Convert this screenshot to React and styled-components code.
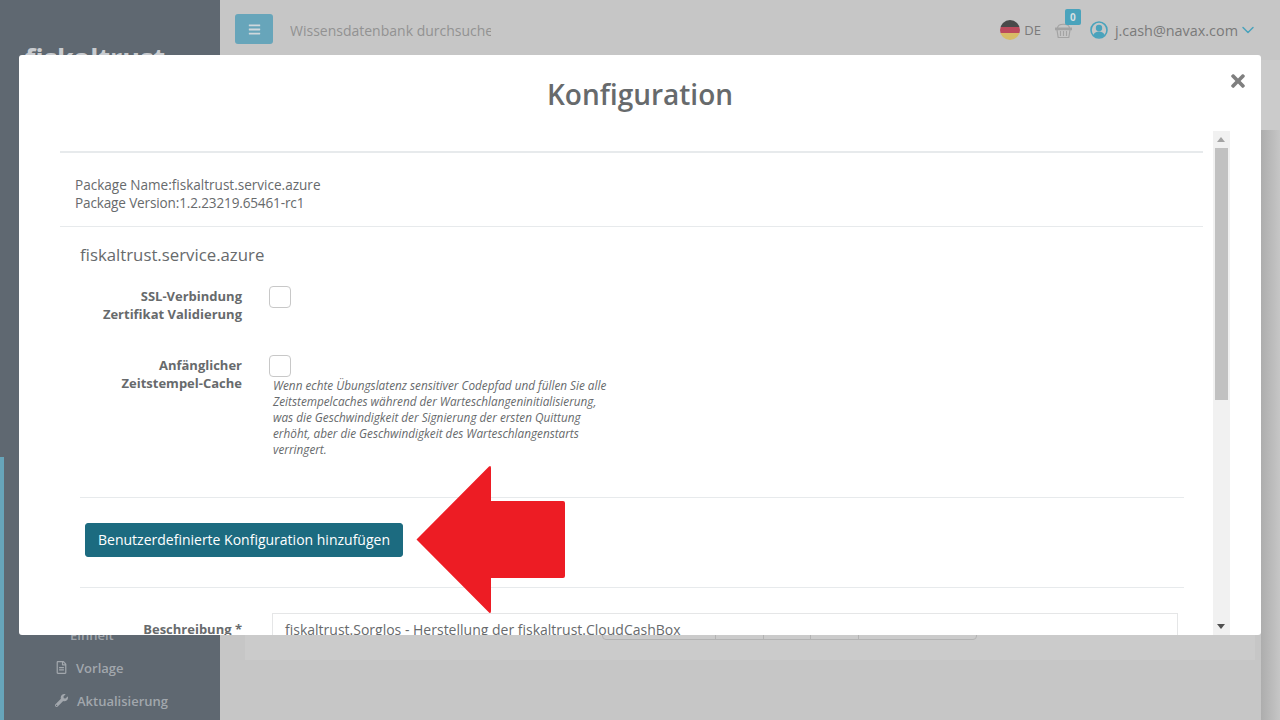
import React from 'react';
import styled, { createGlobalStyle } from 'styled-components';
import { FaBars, FaRegFileAlt, FaWrench, FaTimes } from 'react-icons/fa';
import { ChevronDown } from 'lucide-react';

const Global = createGlobalStyle`
  html, body { margin: 0; padding: 0; height: 720px; overflow: hidden; background: #c6c6c6; }
  body { font-family: "Open Sans", "Noto Sans", sans-serif; color: #676a6c; }
  * { box-sizing: border-box; }
`;

const Page = styled.div`
  display: flex;
  width: 1280px;
  height: 720px;
  overflow: hidden;
  position: relative;
`;

/* page behind the dialog */
const Sidebar = styled.aside`
  width: 220px;
  height: 720px;
  flex: none;
  background: #5f6871;
  display: flex;
  flex-direction: column;
  position: relative;
`;

const ActiveStrip = styled.div`
  position: absolute;
  left: 0;
  top: 457px;
  bottom: 0;
  width: 4px;
  background: #67a5ba;
`;

const Logo = styled.div`
  padding: 41px 0 0 25px;
  height: 618px;
  font-size: 27px;
  line-height: 34px;
  font-weight: 700;
  color: #c9ccd0;
`;

const NavItem = styled.div`
  display: flex;
  align-items: center;
  gap: ${p => p.$gap || 8}px;
  height: 33px;
  padding-left: ${p => p.$indent || 55}px;
  font-size: 13px;
  font-weight: 600;
  color: #a2a7ad;
  svg { font-size: 13px; flex: none; }
`;

const Main = styled.div`
  flex: 1;
  display: flex;
  flex-direction: column;
`;

const Topbar = styled.header`
  height: 60px;
  flex: none;
  padding: 14px 22px 0 15px;
  display: flex;
  align-items: flex-start;
  background: #c6c6c6;
`;

const MenuButton = styled.div`
  width: 38px;
  height: 30px;
  border-radius: 3px;
  background: #67a5ba;
  color: #cfd8dc;
  display: flex;
  align-items: center;
  justify-content: center;
  font-size: 13px;
`;

const Search = styled.div`
  width: 201px;
  margin-left: 17px;
  height: 30px;
  line-height: 34px;
  font-size: 14px;
  color: #929292;
  overflow: hidden;
  white-space: nowrap;
`;

const TopRight = styled.div`
  margin-left: auto;
  display: flex;
  align-items: center;
  height: 32px;
  color: #7a7a7a;
`;

const Lang = styled.span`
  font-size: 13px;
  margin: 0 14px 0 4px;
`;

const Basket = styled.div`
  position: relative;
  width: 17px;
  height: 18px;
  margin-right: 18px;
`;

const Badge = styled.span`
  position: absolute;
  left: 10px;
  top: -12px;
  width: 16px;
  height: 16px;
  border-radius: 2px;
  background: #4aa3bc;
  color: #d5dfe2;
  font-size: 10px;
  font-weight: 700;
  line-height: 16px;
  text-align: center;
`;

const UserMail = styled.span`
  margin-left: 7px;
  font-size: 14.4px;
`;

const PageHeading = styled.div`
  height: 70px;
  flex: none;
  background: #cbcbcb;
`;

const Content = styled.main`
  flex: 1;
  padding: 0 25px 60px 25px;
  display: flex;
`;

const Panel = styled.section`
  flex: 1;
  background: #cbcbcb;
  padding-bottom: 20px;
  display: flex;
  justify-content: flex-end;
  align-items: flex-end;
  padding-right: 278px;
`;

const Pager = styled.div`
  display: flex;
  height: 20px;
  border: 1px solid #b3b3b3;
  border-radius: 0 0 4px 4px;
`;

const PagerCell = styled.div`
  width: ${p => p.$w}px;
  border-left: ${p => (p.$first ? 'none' : '1px solid #b3b3b3')};
`;

const EdgeShadow = styled.div`
  position: absolute;
  top: 130px;
  right: 0;
  bottom: 0;
  width: 19px;
  background: linear-gradient(90deg, #adadad 0%, #c6c6c6 100%);
`;

/* dialog */
const Modal = styled.div`
  position: absolute;
  left: 19px;
  top: 55px;
  width: 1242px;
  height: 580px;
  background: #fff;
  border-radius: 3px;
  overflow: hidden;
  display: flex;
  flex-direction: column;
`;

const ModalHeader = styled.div`
  height: 76px;
  flex: none;
  text-align: center;
  position: relative;
`;

const ModalTitle = styled.h1`
  margin: 0;
  padding-top: 20px;
  font-size: 28px;
  line-height: 39px;
  font-weight: 600;
  color: #676a6c;
`;

const Close = styled.div`
  position: absolute;
  right: 13px;
  top: 16px;
  font-size: 20px;
  line-height: 20px;
  color: #7f7f7f;
`;

const ModalBody = styled.div`
  flex: 1;
  margin: 0 58px 0 41px;
  overflow: hidden;
`;

const Scroll = styled.div`
  position: absolute;
  left: 1213px;
  top: 131px;
  width: 17px;
  height: 504px;
  background: #f1f1f1;
`;

const ScrollThumb = styled.div`
  position: absolute;
  left: 2px;
  top: 17px;
  width: 13px;
  height: 252px;
  background: #c1c1c1;
`;

const ScrollArrow = styled.div`
  position: absolute;
  left: 4px;
  ${p => (p.$down ? 'bottom: 6px; border-top: 5px solid #505050;' : 'top: 6px; border-bottom: 5px solid #a3a3a3;')}
  border-left: 4px solid transparent;
  border-right: 4px solid transparent;
  width: 0;
  height: 0;
`;

const Rule = styled.div`
  height: ${p => p.$h || 1}px;
  background: ${p => p.$c || '#e7eaec'};
  margin: ${p => p.$m || '0'};
`;

const PackageInfo = styled.div`
  padding: 23px 15px 14px;
  font-size: 13.55px;
  line-height: 18px;
`;

const PackageLine = styled.div`
  letter-spacing: ${p => (p.$tight ? '-0.14px' : '0')};
`;

const Form = styled.div`
  padding: 0 19px 0 20px;
`;

const FormTitle = styled.h3`
  margin: 0;
  padding-top: 17px;
  height: 59px;
  font-size: 16.8px;
  line-height: 22px;
  font-weight: 400;
  color: #676a6c;
`;

const Row = styled.div`
  display: grid;
  grid-template-columns: 162px 1fr;
  column-gap: 27px;
  min-height: ${p => p.$min}px;
`;

const Label = styled.label`
  text-align: right;
  font-size: 13px;
  line-height: 18px;
  font-weight: 700;
  padding-top: ${p => p.$top || 1}px;
  color: #676a6c;
`;

const Check = styled.span`
  display: block;
  width: 22px;
  height: 22px;
  border: 1px solid #c8c8c8;
  border-radius: 4px;
  background: #fff;
`;

const Hint = styled.p`
  margin: 0 0 0 4px;
  width: 340px;
  font-size: 11.75px;
  line-height: 16px;
  font-style: italic;
  color: #676a6c;
`;

const ButtonRow = styled.div`
  padding: 25px 0 30px 5px;
`;

const PrimaryButton = styled.button`
  display: block;
  width: 318px;
  height: 34px;
  border: 1px solid #1c6b80;
  border-radius: 3px;
  background: #1c6b80;
  color: #fff;
  font: 400 14px/20px "Open Sans", sans-serif;
  padding: 0;
`;

const InputRow = styled.div`
  display: grid;
  grid-template-columns: 162px 1fr;
  column-gap: 30px;
  padding-top: 25px;
  padding-right: 6px;
`;

const TextInput = styled.div`
  height: 34px;
  border: 1px solid #e5e6e7;
  padding: 6px 12px;
  font-size: 14px;
  line-height: 20px;
  color: #676a6c;
`;

const ArrowMark = styled.svg`
  position: absolute;
  left: 416px;
  top: 465px;
`;

const Flag = () => (
  <svg width="20" height="20" viewBox="0 0 20 20">
    <defs><clipPath id="flag"><circle cx="10" cy="10" r="10" /></clipPath></defs>
    <g clipPath="url(#flag)">
      <rect width="20" height="7" fill="#4a4a4a" />
      <rect y="7" width="20" height="6" fill="#bc4a5c" />
      <rect y="13" width="20" height="7" fill="#d8bc66" />
    </g>
  </svg>
);

const BasketIcon = () => (
  <svg width="17" height="18" viewBox="0 0 17 18" fill="none" stroke="#a3a3a3" strokeWidth="1.2">
    <path d="M2.5 7 C3 2 14 2 14.5 7" />
    <path d="M0.5 7h16v1.6h-16z" fill="#a3a3a3" />
    <path d="M2 9l1.2 7.5h10.6L15 9" />
    <path d="M5.5 10v5M8.5 10v5M11.5 10v5" />
  </svg>
);

const UserIcon = () => (
  <svg width="18" height="18" viewBox="0 0 18 18">
    <circle cx="9" cy="9" r="8" fill="none" stroke="#4aa3bc" strokeWidth="1.6" />
    <circle cx="9" cy="7" r="3.2" fill="#4aa3bc" />
    <path d="M3.4 14.5c.6-3 3-4 5.6-4s5 1 5.6 4c-3 2.6-8.200 2.600-11.200 0z" fill="#4aa3bc" />
  </svg>
);

export default function App() {
  return (
    <Page>
      <Global />
      <Sidebar>
        <ActiveStrip />
        <Logo>fiskaltrust</Logo>
        <NavItem $indent={70}>Einheit</NavItem>
        <NavItem><FaRegFileAlt />Vorlage</NavItem>
        <NavItem $gap={9}><FaWrench />Aktualisierung</NavItem>
      </Sidebar>
      <Main>
        <Topbar>
          <MenuButton><FaBars /></MenuButton>
          <Search>Wissensdatenbank durchsuchen</Search>
          <TopRight>
            <Flag />
            <Lang>DE</Lang>
            <Basket>
              <BasketIcon />
              <Badge>0</Badge>
            </Basket>
            <UserIcon />
            <UserMail>j.cash@navax.com</UserMail>
            <ChevronDown size={20} color="#4aa3bc" strokeWidth={1.8} />
          </TopRight>
        </Topbar>
        <PageHeading />
        <Content>
          <Panel>
            <Pager>
              <PagerCell $first $w={112} />
              <PagerCell $w={48} />
              <PagerCell $w={47} />
              <PagerCell $w={48} />
              <PagerCell $w={118} />
            </Pager>
          </Panel>
        </Content>
      </Main>
      <EdgeShadow />

      <Modal>
        <ModalHeader>
          <ModalTitle>Konfiguration</ModalTitle>
          <Close><FaTimes /></Close>
        </ModalHeader>
        <ModalBody>
          <Rule $h={2} $m="20px 0 0" />
          <PackageInfo>
            <PackageLine>Package Name:fiskaltrust.service.azure</PackageLine>
            <PackageLine $tight>Package Version:1.2.23219.65461-rc1</PackageLine>
          </PackageInfo>
          <Rule />
          <Form>
            <FormTitle>fiskaltrust.service.azure</FormTitle>
            <Row $min={69}>
              <Label>SSL-Verbindung<br />Zertifikat Validierung</Label>
              <div><Check /></div>
            </Row>
            <Row $min={142}>
              <Label>Anfänglicher<br />Zeitstempel-Cache</Label>
              <div>
                <Check />
                <Hint>
                  Wenn echte Übungslatenz sensitiver Codepfad und füllen Sie alle
                  Zeitstempelcaches während der Warteschlangeninitialisierung,
                  was die Geschwindigkeit der Signierung der ersten Quittung
                  erhöht, aber die Geschwindigkeit des Warteschlangenstarts
                  verringert.
                </Hint>
              </div>
            </Row>
            <Rule />
            <ButtonRow>
              <PrimaryButton>Benutzerdefinierte Konfiguration hinzufügen</PrimaryButton>
            </ButtonRow>
            <Rule />
            <InputRow>
              <Label $top={7}>Beschreibung *</Label>
              <TextInput>fiskaltrust.Sorglos - Herstellung der fiskaltrust.CloudCashBox</TextInput>
            </InputRow>
          </Form>
        </ModalBody>
      </Modal>

      <Scroll>
        <ScrollArrow />
        <ScrollThumb />
        <ScrollArrow $down />
      </Scroll>

      <ArrowMark width="150" height="150" viewBox="0 0 150 150">
        <path
          d="M0.500 74.500 L73 1.500 Q75 0 75 3 V36 H147 Q149 36 149 38 V111 Q149 113 147 113 H75 V146 Q75 149 73 147.500 Z"
          fill="#ed1c24"
        />
      </ArrowMark>
    </Page>
  );
}
